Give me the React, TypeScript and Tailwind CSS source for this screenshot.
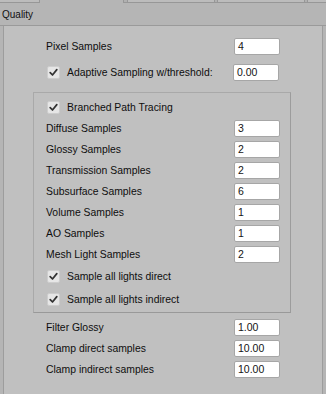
import type { ReactNode } from 'react';

const FONT = { fontFamily: '"Liberation Sans", Arial, sans-serif' };

function Check() {
  return (
    <div className="flex h-[13px] w-[13px] shrink-0 items-center justify-center rounded-[2px] border border-[#cdcdcd] bg-[#e6e6e6]">
      <svg width="9" height="9" viewBox="0 0 9 9" fill="none">
        <path d="M1.2 4.6 L3.5 7 L7.8 1.6" stroke="#333333" strokeWidth="1.7" strokeLinecap="round" strokeLinejoin="round" />
      </svg>
    </div>
  );
}

function ValueBox({ value }: { value: string }) {
  return (
    <div className="flex h-[17px] w-[46px] items-center rounded-[2px] border border-[#a6a6a6] bg-white pl-[3px] text-[10.5px] text-[#141414]">
      {value}
    </div>
  );
}

function Row({ label, value, height = 'h-[21px]', className = '' }: { label: string; value?: string; height?: string; className?: string }) {
  return (
    <div className={`flex items-center ${height} ${className}`}>
      <div className="w-[188px] shrink-0 text-[10.4px] text-[#0e0e0e]">{label}</div>
      {value !== undefined && <ValueBox value={value} />}
    </div>
  );
}

function CheckRow({ label, value, height = 'h-[21px]', className = '' }: { label: string; value?: ReactNode; height?: string; className?: string }) {
  return (
    <div className={`flex items-center ${height} ${className}`}>
      <div className="flex w-[187px] shrink-0 items-center gap-[7px] pl-[1px] text-[10.4px] text-[#0e0e0e]">
        <Check />
        <span>{label}</span>
      </div>
      {value}
    </div>
  );
}

export default function App() {
  return (
    <div className="flex h-[394px] w-[326px] flex-col overflow-hidden bg-[#b5b5b5]" style={FONT}>
      {/* tab strip, mostly cut off */}
      <div className="flex h-[3px] shrink-0">
        <div className="w-[40px] border-b border-r border-[#979797] bg-[#bcbcbc]" />
        <div className="w-[84px] border-r border-[#979797] bg-[#b5b5b5]" />
        <div className="w-[4px] border-b border-r border-[#979797] bg-[#b0b0b0]" />
        <div className="w-[87px] border-b border-r border-[#979797] bg-[#bcbcbc]" />
        <div className="w-[3px] border-b border-r border-[#979797] bg-[#b0b0b0]" />
        <div className="w-[87px] border-b border-r border-[#979797] bg-[#bcbcbc]" />
        <div className="w-[3px] border-b border-r border-[#979797] bg-[#b0b0b0]" />
        <div className="flex-1 border-b border-[#979797] bg-[#bcbcbc]" />
      </div>

      <div className="flex h-[23px] shrink-0 items-center border-b border-[#9a9a9a] pl-[2px] text-[10px] text-[#111111]">
        Quality
      </div>

      <div className="mx-[3px] flex flex-1 flex-col border-x border-[#9d9d9d] bg-[#c0c0c0] pl-[42px] pt-[10px]">
        <Row label="Pixel Samples" value="4" />
        <CheckRow label="Adaptive Sampling w/threshold:" value={<ValueBox value="0.00" />} className="mt-[5px]" />

        <div className="-ml-[13px] mt-[9px] w-[258px] border border-[#a9a9a9] border-b-[#999999] border-r-[#9c9c9c] pb-[1px] pl-[12px] pt-[4px]">
          <CheckRow label="Branched Path Tracing" />
          <Row label="Diffuse Samples" value="3" />
          <Row label="Glossy Samples" value="2" />
          <Row label="Transmission Samples" value="2" />
          <Row label="Subsurface Samples" value="6" />
          <Row label="Volume Samples" value="1" />
          <Row label="AO Samples" value="1" />
          <Row label="Mesh Light Samples" value="2" />
          <CheckRow label="Sample all lights direct" height="h-[23px]" />
          <CheckRow label="Sample all lights indirect" height="h-[23px]" />
        </div>

        <Row label="Filter Glossy" value="1.00" className="mt-[4px]" />
        <Row label="Clamp direct samples" value="10.00" />
        <Row label="Clamp indirect samples" value="10.00" />
      </div>
    </div>
  );
}
